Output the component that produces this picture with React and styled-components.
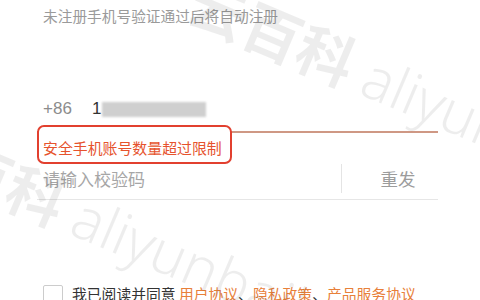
import React, { useState } from "react";
import styled, { createGlobalStyle } from "styled-components";

const GlobalStyle = createGlobalStyle`
  html, body {
    margin: 0;
    padding: 0;
    background: #ffffff;
  }
  body {
    font-family: "Noto Sans CJK SC", "Noto Sans", sans-serif;
  }
`;

const Page = styled.div`
  position: relative;
  width: 480px;
  height: 300px;
  overflow: hidden;
  background: #ffffff;
`;

const Form = styled.div`
  display: flex;
  flex-direction: column;
  padding: 0 42px 0 37px;
`;

const Hint = styled.div`
  margin-top: 6px;
  padding-left: 6px;
  font-size: 14.7px;
  line-height: 20px;
  color: #9a9a9a;
`;

const PhoneRow = styled.div`
  display: flex;
  align-items: center;
  margin-top: 71px;
  height: 24px;
  padding: 0 0 10px 6px;
  border-bottom: 2px solid #cf9884;
`;

const Prefix = styled.span`
  width: 49px;
  font-family: "Liberation Sans", Arial, sans-serif;
  font-size: 17px;
  color: #8c8c8c;
`;

const PhoneDigit = styled.span`
  font-family: "Liberation Sans", Arial, sans-serif;
  font-size: 17px;
  color: #333333;
`;

const Masked = styled.span`
  display: inline-block;
  width: 104px;
  height: 15px;
  margin-left: 1px;
  background: #cfcfcf;
  filter: blur(1.2px);
`;

const ErrorBox = styled.div`
  position: relative;
  align-self: flex-start;
  margin-top: -8px;
  padding: 11px 8px 4px 4px;
  border: 2px solid #e2402f;
  border-radius: 7px;
  background: #ffffff;
  font-size: 14.9px;
  line-height: 20px;
  color: #e6532d;
`;

const CodeRow = styled.div`
  display: flex;
  align-items: center;
  height: 28px;
  padding-bottom: 7px;
  border-bottom: 1px solid #e6e6e6;
`;

const CodeInput = styled.input`
  flex: 1;
  min-width: 0;
  height: 28px;
  padding: 0 0 0 6px;
  border: none;
  outline: none;
  background: transparent;
  font-family: "Noto Sans CJK SC", sans-serif;
  font-size: 17px;
  color: #333333;

  &::placeholder {
    color: #a6a6a6;
  }
`;

const Divider = styled.span`
  width: 1px;
  height: 29px;
  margin-top: 1px;
  background: #e4e4e4;
`;

const Resend = styled.button`
  width: 96px;
  padding: 0 0 0 16px;
  border: none;
  background: none;
  font-family: "Noto Sans CJK SC", sans-serif;
  font-size: 17.5px;
  color: #9c9c9c;
  cursor: pointer;
`;

const AgreeRow = styled.label`
  display: flex;
  align-items: flex-start;
  gap: 9px;
  margin-top: 84px;
  padding-left: 6px;
  font-size: 14.8px;
  line-height: 20px;
  color: #333333;
`;

const Box = styled.span`
  flex: none;
  width: 18px;
  height: 18px;
  margin-top: 1px;
  border: 1px solid #cccccc;
  border-radius: 2px;
  background: ${(p) => (p.checked ? "#e8803a" : "#ffffff")};
`;

const Link = styled.a`
  color: #e8803a;
  text-decoration: none;
`;

const Watermark = styled.div`
  position: absolute;
  left: ${(p) => p.x}px;
  top: ${(p) => p.y}px;
  transform: rotate(23deg);
  transform-origin: left top;
  white-space: nowrap;
  pointer-events: none;
  color: rgba(0, 0, 0, 0.07);
  font-size: 58px;
  line-height: 1;
`;

const WmHan = styled.span`
  font-family: "Noto Sans CJK SC", sans-serif;
  font-weight: 700;
`;

const WmLatin = styled.span`
  margin-left: 14px;
  font-family: "Noto Sans", sans-serif;
  font-weight: 300;
`;

export default function App() {
  const [checked, setChecked] = useState(false);

  return (
    <Page>
      <GlobalStyle />
      <Form>
        <Hint>未注册手机号验证通过后将自动注册</Hint>
        <PhoneRow>
          <Prefix>+86</Prefix>
          <PhoneDigit>1</PhoneDigit>
          <Masked />
        </PhoneRow>
        <ErrorBox>安全手机账号数量超过限制</ErrorBox>
        <CodeRow>
          <CodeInput placeholder="请输入校验码" />
          <Divider />
          <Resend>重发</Resend>
        </CodeRow>
        <AgreeRow onClick={() => setChecked(!checked)}>
          <Box checked={checked} />
          <span>
            我已阅读并同意 <Link>用户协议</Link>、<Link>隐私政策</Link>、
            <Link>产品服务协议</Link>
          </span>
        </AgreeRow>
      </Form>
      <Watermark x={205} y={-30}>
        <WmHan>云百科</WmHan>
        <WmLatin>aliyunbaike</WmLatin>
      </Watermark>
      <Watermark x={-85} y={110}>
        <WmHan>云百科</WmHan>
        <WmLatin>aliyunbaike</WmLatin>
      </Watermark>
    </Page>
  );
}
